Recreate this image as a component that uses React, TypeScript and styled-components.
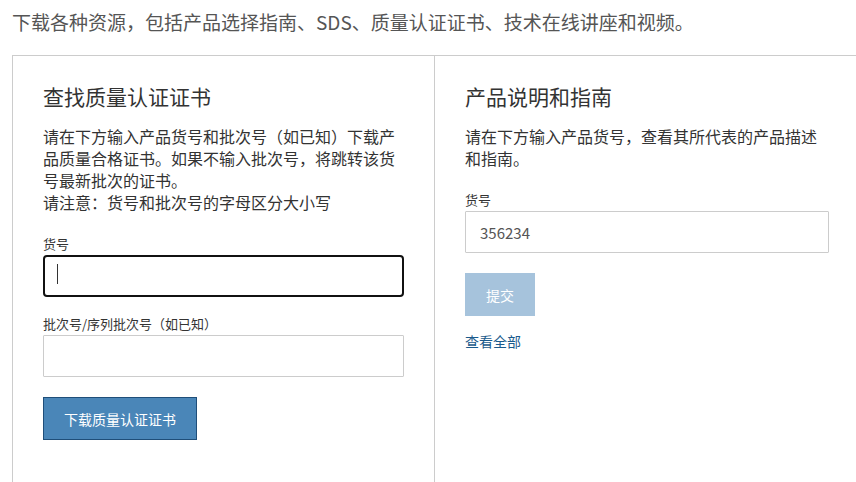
import React from 'react';
import styled, { createGlobalStyle } from "styled-components";

const GlobalStyle = createGlobalStyle`
    html, body {
        margin: 0;
        padding: 0;
        overflow: hidden;
        background: #ffffff;
    }
    body {
        font-family: "Noto Sans CJK SC", "Noto Sans", "Liberation Sans", sans-serif;
        color: #333333;
    }
`

const Page = styled.div`
    padding: 0 0 0 12px;
`

const Intro = styled.p`
    margin: 0;
    padding-top: 7px;
    height: 48px;
    font-size: 19px;
    line-height: 30px;
    color: #555555;
    white-space: nowrap;
`

// panel runs off the right and bottom edge of the window, as in the design
const Panel = styled.div`
    display: grid;
    grid-template-columns: 421px 425px;
    border: 1px solid #cccccc;
    border-bottom: none;
    width: 846px;
    min-height: 426px;
`

const Column = styled.section<{ $divider?: boolean }>`
    padding: 26px 30px 0 30px;
    border-left: ${p => (p.$divider ? '1px solid #cccccc' : 'none')};
    display: flex;
    flex-direction: column;
    align-items: flex-start;
`

const Heading = styled.h2`
    margin: 0 0 14px 0;
    font-size: 21px;
    font-weight: 400;
    line-height: 29px;
    color: #333333;
`

const Text = styled.p`
    margin: 0;
    font-size: 16px;
    line-height: 22px;
    color: #333333;
`

const Label = styled.label`
    display: block;
    margin-top: 21px;
    margin-bottom: 1px;
    font-size: 13px;
    line-height: 20px;
    color: #333333;
`

const SecondLabel = styled(Label)`
    margin-top: 17px;
`

const Input = styled.input<{ $focused?: boolean }>`
    box-sizing: border-box;
    width: 100%;
    height: 42px;
    margin: 0;
    padding: 0 14px;
    font-family: "Noto Sans CJK SC", "Noto Sans", "Liberation Sans", sans-serif;
    font-size: 15px;
    color: #555555;
    background: #ffffff;
    outline: none;
    border: ${p => (p.$focused ? '2px solid #111111' : '1px solid #cccccc')};
    border-radius: ${p => (p.$focused ? '4px' : '1px')};
`

const Caret = styled.span`
    display: block;
    width: 1px;
    height: 20px;
    background: #333333;
    position: absolute;
    left: 14px;
    top: 9px;
`

const FieldWrap = styled.div`
    position: relative;
    width: 100%;
`

const Button = styled.button<{ $disabled?: boolean }>`
    margin-top: 20px;
    height: 43px;
    padding: 0 20px;
    font-family: "Noto Sans CJK SC", "Noto Sans", "Liberation Sans", sans-serif;
    font-size: 14px;
    color: #ffffff;
    background: ${p => (p.$disabled ? '#a6c3dc' : '#4a86b8')};
    border: 1px solid ${p => (p.$disabled ? '#a6c3dc' : '#1f4e79')};
    border-radius: 0;
    cursor: ${p => (p.$disabled ? 'default' : 'pointer')};
`

const Link = styled.a`
    margin-top: 15px;
    font-size: 14px;
    line-height: 20px;
    color: #1a5a8c;
    text-decoration: none;
`

export default function App() {
    return (
        <Page>
            <GlobalStyle />
            <Intro>下载各种资源，包括产品选择指南、SDS、质量认证证书、技术在线讲座和视频。</Intro>
            <Panel>
                <Column>
                    <Heading>查找质量认证证书</Heading>
                    <Text>请在下方输入产品货号和批次号（如已知）下载产品质量合格证书。如果不输入批次号，将跳转该货号最新批次的证书。</Text>
                    <Text>请注意：货号和批次号的字母区分大小写</Text>
                    <Label>货号</Label>
                    <FieldWrap>
                        <Input $focused defaultValue="" />
                        <Caret />
                    </FieldWrap>
                    <SecondLabel>批次号/序列批次号（如已知）</SecondLabel>
                    <Input defaultValue="" />
                    <Button>下载质量认证证书</Button>
                </Column>
                <Column $divider>
                    <Heading>产品说明和指南</Heading>
                    <Text>请在下方输入产品货号，查看其所代表的产品描述和指南。</Text>
                    <Label>货号</Label>
                    <Input defaultValue="356234" />
                    <Button $disabled>提交</Button>
                    <Link href="#">查看全部</Link>
                </Column>
            </Panel>
        </Page>
    );
}
